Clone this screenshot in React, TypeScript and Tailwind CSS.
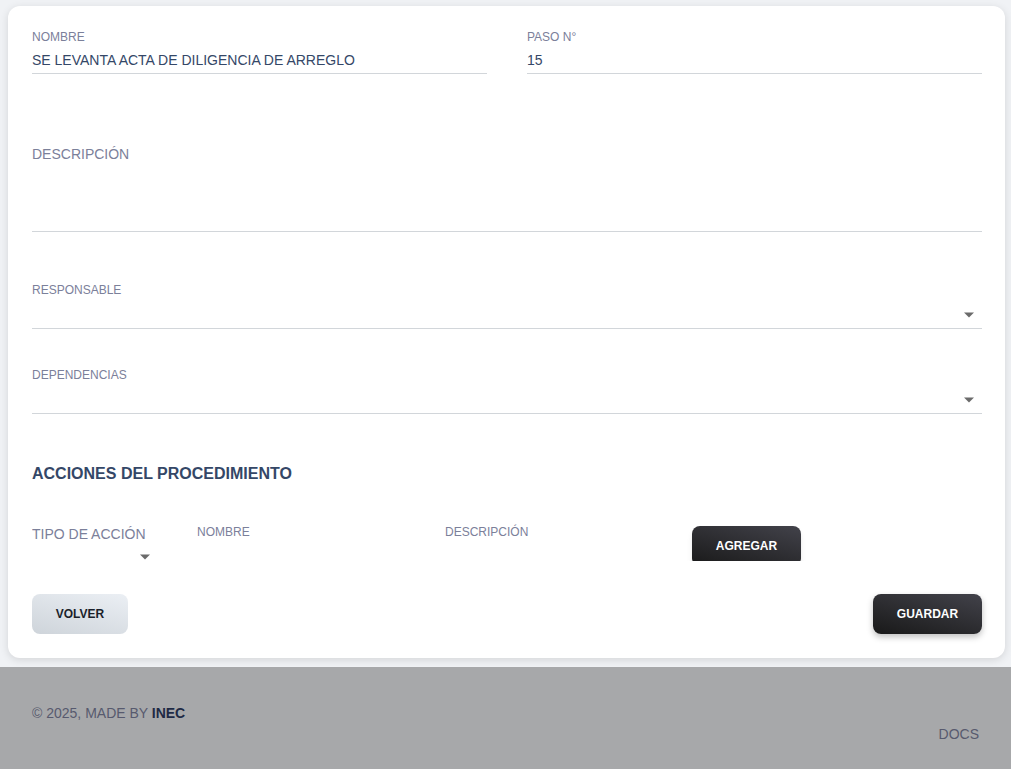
import React from "react";

const Caret = () => (
  <svg width="10" height="6" viewBox="0 0 10 5" className="fill-[#6b6b6b]">
    <path d="M0 0h10L5 5z" />
  </svg>
);

const TextField = ({ label, value }: { label: string; value: string }) => (
  <div className="flex flex-col border-b border-[#d2d6da]">
    <span className="h-4 text-xs leading-4 text-[#7b809a]">{label}</span>
    <span className="mt-[4px] h-[24px] text-sm leading-[22px] text-[#344767]">{value}</span>
  </div>
);

const SelectField = ({ label, className }: { label: string; className: string }) => (
  <div className={`flex flex-col ${className}`}>
    <span className="h-4 text-xs leading-4 text-[#7b809a]">{label}</span>
    <div className="flex h-[31px] items-end justify-end border-b border-[#d2d6da] pb-[10px] pr-[8px]">
      <Caret />
    </div>
  </div>
);

export default function App() {
  return (
    <div className="flex min-h-screen flex-col bg-[#f0f2f5] font-['Liberation_Sans',Arial,sans-serif]">
      {/* card */}
      <div className="ml-2 mr-[6px] mt-[6px] rounded-xl bg-white pb-6 pl-6 pr-[23px] pt-[23px] shadow-[0_2px_8px_rgba(0,0,0,0.12)]">
        <div className="grid grid-cols-2 gap-10">
          <TextField label="NOMBRE" value="SE LEVANTA ACTA DE DILIGENCIA DE ARREGLO" />
          <TextField label="PASO N°" value="15" />
        </div>

        <div className="mt-[66px] h-[92px] border-b border-[#d2d6da] pt-[4px] text-sm leading-5 text-[#7b809a]">
          DESCRIPCIÓN
        </div>

        <SelectField label="RESPONSABLE" className="mt-[50px]" />
        <SelectField label="DEPENDENCIAS" className="mt-[38px]" />

        <h2 className="mt-[48px] text-base font-bold leading-6 text-[#344767]">
          ACCIONES DEL PROCEDIMIENTO
        </h2>

        {/* acciones row */}
        <div className="mt-[38px] flex h-[37px] overflow-hidden">
          <div className="flex w-[165px] flex-col">
            <span className="text-sm leading-5 text-[#7b809a]">TIPO DE ACCIÓN</span>
            <div className="mt-[10px] flex w-[118px] justify-end">
              <Caret />
            </div>
          </div>
          <span className="w-[248px] text-xs leading-4 text-[#7b809a]">NOMBRE</span>
          <span className="w-[247px] text-xs leading-4 text-[#7b809a]">DESCRIPCIÓN</span>
          <button className="mt-[2px] h-[40px] w-[109px] rounded-lg bg-[linear-gradient(195deg,#42424a,#191919)] text-xs font-bold text-white shadow-md">
            AGREGAR
          </button>
        </div>

        <div className="mt-[33px] flex justify-between">
          <button className="h-10 w-[96px] rounded-lg bg-[linear-gradient(195deg,#ebeff4,#ced4da)] text-xs font-bold text-[#1a1f2b]">
            VOLVER
          </button>
          <button className="h-10 w-[109px] rounded-lg bg-[linear-gradient(195deg,#42424a,#191919)] text-xs font-bold text-white shadow-[0_3px_6px_rgba(0,0,0,0.25)]">
            GUARDAR
          </button>
        </div>
      </div>

      {/* footer */}
      <footer className="mt-[9px] flex flex-1 justify-between bg-[#a7a8aa] px-8 pb-6 pt-[36px]">
        <p className="text-sm leading-5 text-[#575a6e]">
          © 2025, MADE BY <span className="font-bold text-[#1e2a45]">INEC</span>
        </p>
        <a className="mt-[21px] text-sm leading-5 text-[#575a6e]">DOCS</a>
      </footer>
    </div>
  );
}
